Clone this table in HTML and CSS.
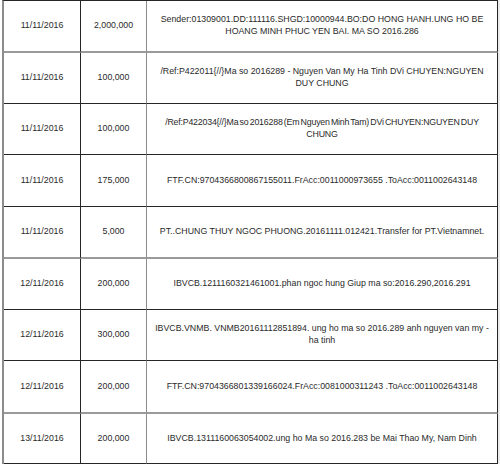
FILE: index.html
```html
<!DOCTYPE html>
<html lang="vi">
<head>
<meta charset="utf-8">
<title>Danh sách ủng hộ</title>
<link rel="stylesheet" href="styles.css">
</head>
<body>
<table class="sheet">
  <colgroup>
    <col class="c-date">
    <col class="c-amount">
    <col class="c-desc">
  </colgroup>
  <tbody>
    <tr class="r-h50 line-gray">
      <td class="date">11/11/2016</td>
      <td class="amount">2,000,000</td>
      <td class="desc">Sender:01309001.DD:111116.SHGD:10000944.BO:DO HONG HANH.UNG HO BE HOANG MINH PHUC YEN BAI. MA SO 2016.286</td>
    </tr>
    <tr class="r-h50 line-dark">
      <td class="date">11/11/2016</td>
      <td class="amount">100,000</td>
      <td class="desc">/Ref:P422011{//}Ma so 2016289 - Nguyen Van My Ha Tinh DVi CHUYEN:NGUYEN DUY CHUNG</td>
    </tr>
    <tr class="r-h50 line-dark">
      <td class="date">11/11/2016</td>
      <td class="amount">100,000</td>
      <td class="desc desc-tight">/Ref:P422034{//}Ma so 2016288 (Em Nguyen Minh Tam) DVi CHUYEN:NGUYEN DUY<br>CHUNG</td>
    </tr>
    <tr class="r-h51 line-dark">
      <td class="date">11/11/2016</td>
      <td class="amount">175,000</td>
      <td class="desc">FTF.CN:9704366800867155011.FrAcc:0011000973655 .ToAcc:0011002643148</td>
    </tr>
    <tr class="r-h50 line-gray">
      <td class="date">11/11/2016</td>
      <td class="amount">5,000</td>
      <td class="desc">PT..CHUNG THUY NGOC PHUONG.20161111.012421.Transfer for PT.Vietnamnet.</td>
    </tr>
    <tr class="r-h50 line-dark">
      <td class="date">12/11/2016</td>
      <td class="amount">200,000</td>
      <td class="desc">IBVCB.1211160321461001.phan ngoc hung Giup ma so:2016.290,2016.291</td>
    </tr>
    <tr class="r-h50 line-dark">
      <td class="date">12/11/2016</td>
      <td class="amount">300,000</td>
      <td class="desc">IBVCB.VNMB. VNMB20161112851894. ung ho ma so 2016.289 anh nguyen van my - ha tinh</td>
    </tr>
    <tr class="r-h51 line-gray">
      <td class="date">12/11/2016</td>
      <td class="amount">200,000</td>
      <td class="desc">FTF.CN:9704366801339166024.FrAcc:0081000311243 .ToAcc:0011002643148</td>
    </tr>
    <tr class="r-h49 line-dark">
      <td class="date">13/11/2016</td>
      <td class="amount">200,000</td>
      <td class="desc">IBVCB.1311160063054002.ung ho Ma so 2016.283 be Mai Thao My, Nam Dinh</td>
    </tr>
  </tbody>
</table>
</body>
</html>
```

FILE: styles.css
```css
html, body {
  margin: 0;
  padding: 0;
  background: #ffffff;
}

body {
  font-family: "Liberation Sans", Arial, sans-serif;
  font-size: 8.8px;
  line-height: 11.7px;
  color: #2a2a2a;
}

.sheet {
  margin-left: 2px;
  border-collapse: separate;
  border-spacing: 0;
  table-layout: fixed;
  width: 496px;
  border-left: 2px solid #8c8c8c;
  border-top: 1px solid #262626;
  box-shadow: 2px 0 0 #ececec;
}

.c-date { width: 77px; }
.c-amount { width: 66px; }
.c-desc { width: 351px; }

.sheet td {
  padding: 0 4px;
  vertical-align: middle;
  text-align: center;
  box-sizing: border-box;
}

.sheet td.date {
  border-right: 1px solid #262626;
}

.sheet td.amount {
  border-right: 1px solid #8c8c8c;
}

.sheet td.desc {
  border-right: 1px solid #262626;
  padding: 0 4px;
}

.sheet td.desc-tight {
  padding: 0 2px;
  letter-spacing: -0.2px;
  word-spacing: -1px;
}

.line-dark td { border-bottom: 1px solid #262626; }
.line-gray td { border-bottom: 2px solid #9a9a9a; }

.r-h49 td { height: 49px; }
.r-h50 td { height: 50px; }
.r-h51 td { height: 51px; }
.line-dark.r-h49 td { height: 50px; }
.line-dark.r-h50 td { height: 51px; }
.line-dark.r-h51 td { height: 52px; }
.line-gray.r-h50 td { height: 52px; }
.line-gray.r-h51 td { height: 53px; }
```
